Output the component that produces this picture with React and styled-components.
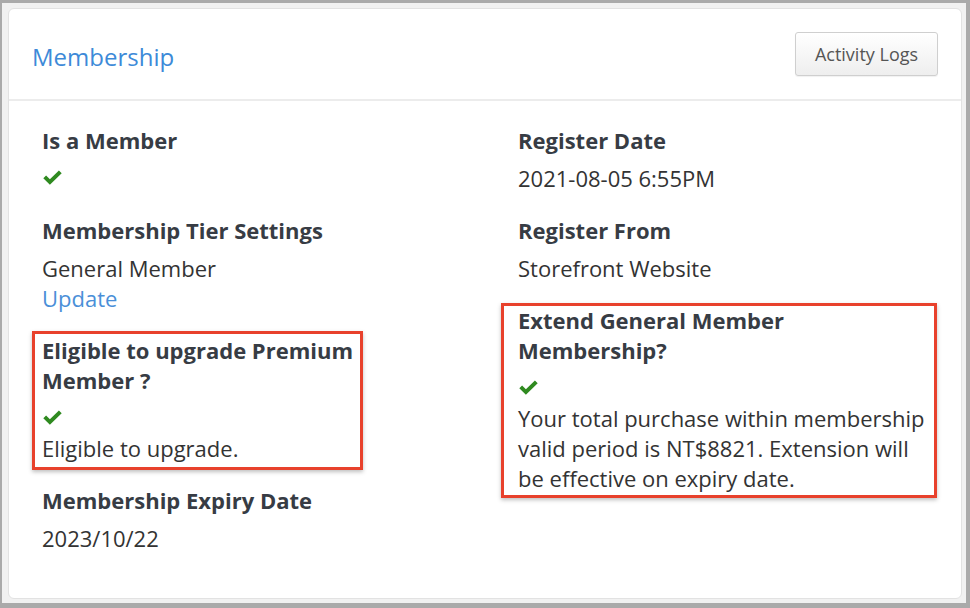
import React from "react";
import styled, { createGlobalStyle } from "styled-components";

const Global = createGlobalStyle`
  html, body { margin: 0; padding: 0; background: #aaaaaa; }
  body { font-family: "Open Sans", "Liberation Sans", sans-serif; }
  * { box-sizing: border-box; }
`;

const Frame = styled.div`
  margin: 3px 4px 0 2px;
  height: 600px;
  background: #f1f1f1;
  padding: 5px 4px 4px 6px;
`;

const Card = styled.section`
  height: 100%;
  background: #fff;
  border: 1px solid #e2e2e2;
  border-radius: 6px;
  display: flex;
  flex-direction: column;
`;

const Header = styled.header`
  display: flex;
  align-items: center;
  justify-content: space-between;
  height: 92px;
  padding: 0 23px 0 23px;
  border-bottom: 2px solid #ececec;
`;

const Title = styled.h2`
  margin: 0;
  font-size: 24px;
  font-weight: 400;
  color: #3d8ad8;
  padding-top: 4px;
`;

const Button = styled.button`
  height: 44px;
  width: 143px;
  font-family: inherit;
  font-size: 18px;
  color: #555;
  border: 1px solid #cfcfcf;
  border-radius: 3px;
  background: linear-gradient(#ffffff, #eeeeee);
  box-shadow: 0 1px 1px rgba(0, 0, 0, 0.06);
  cursor: pointer;
`;

const Body = styled.div`
  display: grid;
  grid-template-columns: 320px 1fr;
  column-gap: 156px;
  padding: 24px 28px 0 33px;
`;

const Column = styled.div`
  display: flex;
  flex-direction: column;
  gap: 22px;
`;

const Item = styled.div`
  position: relative;
  ${(p) =>
    p.$mark &&
    `
    &::after {
      content: "";
      position: absolute;
      top: ${p.$mark.top}px;
      left: ${p.$mark.left}px;
      right: ${p.$mark.right}px;
      bottom: ${p.$mark.bottom}px;
      border: 3px solid #e8412c;
      box-shadow: 0 2px 4px rgba(0,0,0,0.25);
      pointer-events: none;
    }
  `}
`;

const Label = styled.div`
  font-size: 22px;
  line-height: 30px;
  font-weight: 700;
  color: #373c44;
  margin-bottom: 8px;
`;

const Value = styled.div`
  font-size: 22px;
  line-height: 30px;
  color: #333;
`;

const Link = styled.a`
  display: block;
  font-size: 22px;
  line-height: 30px;
  color: #4a8fd8;
  text-decoration: none;
`;

const CheckRow = styled.div`
  height: 30px;
  display: flex;
  align-items: center;
`;

const Check = () => (
  <CheckRow>
    <svg width="21" height="16" viewBox="0 0 20 16" aria-hidden="true">
      <path
        d="M0.8 8.2 L3.6 5.4 L7.4 9.2 L16.4 0.4 L19.2 3.2 L7.4 14.8 Z"
        fill="#2f8a20"
      />
    </svg>
  </CheckRow>
);

export default function App() {
  return (
    <>
      <Global />
      <Frame>
        <Card>
          <Header>
            <Title>Membership</Title>
            <Button>Activity Logs</Button>
          </Header>
          <Body>
            <Column>
              <Item>
                <Label>Is a Member</Label>
                <Check />
              </Item>
              <Item>
                <Label>Membership Tier Settings</Label>
                <Value>General Member</Value>
                <Link href="#">Update</Link>
              </Item>
              <Item $mark={{ top: -4, left: -10, right: -1, bottom: -7 }}>
                <Label>Eligible to upgrade Premium Member ?</Label>
                <Check />
                <Value>Eligible to upgrade.</Value>
              </Item>
              <Item>
                <Label>Membership Expiry Date</Label>
                <Value>2023/10/22</Value>
              </Item>
            </Column>
            <Column>
              <Item>
                <Label>Register Date</Label>
                <Value>2021-08-05 6:55PM</Value>
              </Item>
              <Item>
                <Label>Register From</Label>
                <Value>Storefront Website</Value>
              </Item>
              <Item $mark={{ top: -2, left: -17, right: -4, bottom: -5 }}>
                <Label>Extend General Member Membership?</Label>
                <Check />
                <Value>
                  Your total purchase within membership valid period is
                  NT$8821. Extension will be effective on expiry date.
                </Value>
              </Item>
            </Column>
          </Body>
        </Card>
      </Frame>
    </>
  );
}
